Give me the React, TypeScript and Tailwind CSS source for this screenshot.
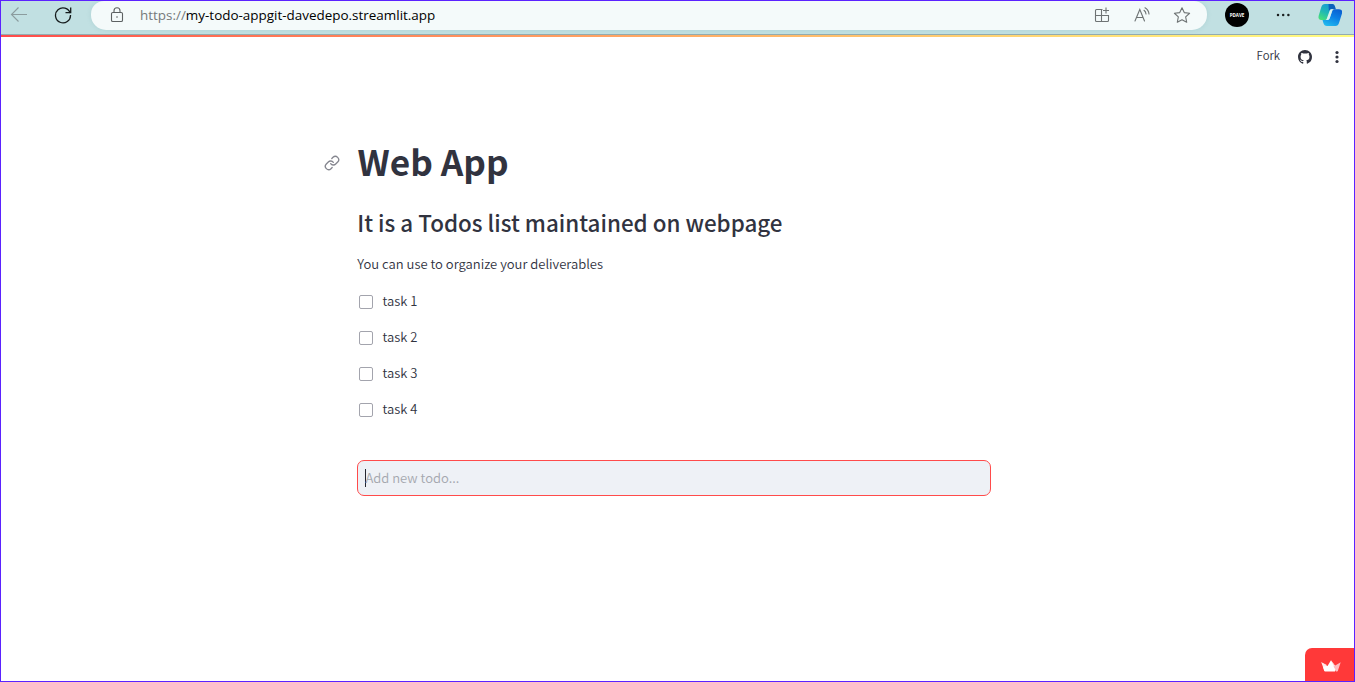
import React from "react";

const sans = "font-['Noto_Sans_CJK_SC','Noto_Sans_CJK_JP',sans-serif]";

function AddressBar() {
  return (
    <div className="flex h-[29px] w-[1116px] items-center rounded-b-[15px] rounded-t-[13px] bg-[#f4fafa] shadow-[0_0_4px_rgba(120,170,175,0.25)]">
      <svg className="-mt-[2px] ml-[19px] h-4 w-[14px]" viewBox="0 0 14 16" fill="none" stroke="#5c6162" strokeWidth="1.1">
        <rect x="1.5" y="5.5" width="11" height="9" rx="1.3" />
        <path d="M4 5.5V3.8a3 3 0 0 1 6 0v1.7" />
        <circle cx="7" cy="10" r="0.8" fill="#5c6162" stroke="none" />
      </svg>
      <div className="-mt-[2px] ml-4 h-5 w-[300px] whitespace-nowrap font-['Open_Sans',sans-serif] text-[13.45px] leading-5 text-black">
        <span className="text-[#74797a]">https://</span>my-todo-appgit-davedepo.streamlit.app
      </div>
      <div className="-mt-[2px] ml-auto mr-[16px] flex items-center gap-[22px]">
        <svg className="h-[18px] w-[18px]" viewBox="0 0 18 18" fill="none" stroke="#6e7374" strokeWidth="1.1">
          <path d="M9.500 3.500h-6a1 1 0 0 0-1 1v10a1 1 0 0 0 1 1h11a1 1 0 0 0 1-1v-5h-13M8.500 3.500v12M13 1.500v6M10 4.500h6" />
        </svg>
        <svg className="h-[18px] w-[18px]" viewBox="0 0 18 18" fill="none" stroke="#6e7374" strokeWidth="1.1" strokeLinecap="round">
          <path d="M2 15L6.800 3.500l4.700 11.500M3.600 11.500h6.300M11 4.300a5 5 0 0 1 2 3.700M12 1.800a8 8 0 0 1 4 6.200" />
        </svg>
        <svg className="h-[18px] w-[18px]" viewBox="0 0 18 18" fill="none" stroke="#6e7374" strokeWidth="1.1" strokeLinejoin="round">
          <path d="M9 1.700l2.250 4.900 5.350.65-3.950 3.650 1.050 5.350L9 13.650 4.300 16.250l1.050-5.350L1.400 7.250l5.350-.65z" />
        </svg>
      </div>
    </div>
  );
}

function BrowserBar() {
  return (
    <header className="flex h-[34px] items-start border-b border-[#92acb0] bg-[#c1e0e2]">
      <svg className="ml-[9px] mt-[5px] h-[18px] w-[18px]" viewBox="0 0 18 18" fill="none" stroke="#8b9c9e" strokeWidth="1.1">
        <path d="M17 8.500H1.500M8.500 1.500l-7 7 7 7" />
      </svg>
      <svg className="ml-[26px] mt-[5px] h-[18px] w-[18px]" viewBox="0 0 18 18" fill="none" stroke="#151b1c" strokeWidth="1.3">
        <path d="M16.200 7.200A7.500 7.500 0 1 0 16.500 9M16.700 1.500v5.200h-5.200" />
      </svg>
      <div className="ml-[19px]">
        <AddressBar />
      </div>
      <div className="ml-[18px] mt-[2px] flex h-6 w-6 items-center justify-center rounded-full bg-black font-['Open_Sans',sans-serif] text-[4.500px] font-bold leading-6 text-white">
        <span className="-mt-px">PDAVE</span>
      </div>
      <svg className="ml-[26px] mt-[12px] h-1 w-4" viewBox="0 0 16 4" fill="#1b2021">
        <circle cx="3" cy="2" r="1.250" />
        <circle cx="8.200" cy="2" r="1.250" />
        <circle cx="13.400" cy="2" r="1.250" />
      </svg>
      <svg className="ml-[27px] mt-[2px] h-6 w-6" viewBox="0 0 24 24">
        <defs>
          <linearGradient id="leaf" x1="0.700" y1="0" x2="0.200" y2="1">
            <stop offset="0" stopColor="#1499d6" />
            <stop offset="0.500" stopColor="#20b7b6" />
            <stop offset="1" stopColor="#49e178" />
          </linearGradient>
          <linearGradient id="wave" x1="0.800" y1="0" x2="0.300" y2="1">
            <stop offset="0" stopColor="#0a5fd0" />
            <stop offset="0.450" stopColor="#0b7fe4" />
            <stop offset="1" stopColor="#20b8ee" />
          </linearGradient>
        </defs>
        <path d="M7 1h8.500L10 15.500c-.4 1-1.100 1.500-2 1.500H3.500C.8 17 .1 15.200.6 13L3.300 4C3.900 2.100 5.100 1 7 1z" fill="url(#leaf)" />
        <path d="M10.500 1H14c2 0 2.700 1.200 3.200 3l.7 2.200h-4c-1.500 0-2.500.6-3 2.300z" fill="#0a62bb" />
        <path d="M17.500 23H9c-2 0-3-1.200-3.600-3l-.9-3H9c1.700 0 2.500-.8 3-2.400l2.300-6.700c.4-1.200 1.200-1.700 2.500-1.700H21c3 0 3.600 2.200 2.900 4.600L21 20c-.6 2-1.700 3-3.500 3z" fill="url(#wave)" />
        <path d="M11.700 7.500c.3-.9 1-1.300 2-1.300h2.100c-1 .2-1.500.8-1.800 1.700l-2.300 7c-.5 1.400-1.200 2.100-2.700 2.100H7.400c1-.3 1.300-.9 1.600-2z" fill="#d8f1ef" />
      </svg>
    </header>
  );
}

function Toolbar() {
  return (
    <div className="flex h-[40px] items-center justify-end pr-[13px] text-[#31333f]">
      <span className={`${sans} -mt-[5px] mr-[18px] text-[11.400px] font-[350] leading-5`}>Fork</span>
      <svg className="mr-[21px] h-[14px] w-[14px]" viewBox="0 0 16 16" fill="currentColor">
        <path d="M8 0C3.580 0 0 3.580 0 8c0 3.540 2.290 6.530 5.470 7.590.4.070.55-.17.55-.38 0-.19-.01-.82-.01-1.490-2.010.37-2.530-.49-2.690-.94-.09-.23-.48-.94-.82-1.130-.28-.15-.68-.52-.01-.53.63-.01 1.080.58 1.230.82.72 1.210 1.870.87 2.330.66.07-.52.28-.87.51-1.070-1.780-.2-3.640-.89-3.640-3.950 0-.87.31-1.590.82-2.150-.08-.2-.36-1.020.08-2.120 0 0 .67-.21 2.200.82a7.600 7.600 0 0 1 4 0c1.530-1.040 2.200-.82 2.200-.82.44 1.100.16 1.920.08 2.120.51.56.82 1.270.82 2.150 0 3.070-1.870 3.750-3.650 3.950.29.25.54.73.54 1.480 0 1.070-.01 1.930-.01 2.200 0 .21.15.46.55.38A8 8 0 0 0 16 8c0-4.420-3.580-8-8-8z" />
      </svg>
      <svg className="h-[14px] w-2" viewBox="0 0 8 14" fill="currentColor">
        <circle cx="4" cy="2.500" r="1.600" />
        <circle cx="4" cy="7" r="1.600" />
        <circle cx="4" cy="11.500" r="1.600" />
      </svg>
    </div>
  );
}

function Task({ label }: { label: string }) {
  return (
    <label className="flex h-9 items-center text-[13.030px] font-[350] leading-5">
      <span className="ml-[2px] mr-[9.500px] mt-[1px] h-[14px] w-[14px] rounded-[2px] border border-[#a3a4ad] bg-white" />
      <span>{label}</span>
    </label>
  );
}

export default function App() {
  return (
    <div className="relative flex h-[682px] w-[1355px] flex-col overflow-hidden border border-[#5b22ff] bg-white">
      <BrowserBar />
      <div className="h-[2px] shrink-0 bg-linear-to-r from-[#ff4b4b] to-[#fffd80]" />
      <Toolbar />
      <main className={`${sans} ml-[356px] w-[634px] pt-[58px] text-[#31333f]`}>
        <div className="-ml-[33px] flex h-[52px] items-center">
          <svg className="mr-[17.500px] mt-[4px] h-4 w-4" viewBox="0 0 24 24" fill="none" stroke="#85868f" strokeWidth="2" strokeLinecap="round" strokeLinejoin="round">
            <path d="M10 13a5 5 0 0 0 7.540.540l3-3a5 5 0 0 0-7.070-7.070l-1.720 1.710" />
            <path d="M14 11a5 5 0 0 0-7.540-.540l-3 3a5 5 0 0 0 7.070 7.070l1.710-1.710" />
          </svg>
          <h1 className="whitespace-nowrap text-[35.200px] font-bold leading-[52px]">Web App</h1>
        </div>
        <h3 className="mt-[17px] h-9 whitespace-nowrap pl-[0.300px] text-[22.400px] font-medium leading-9">It is a Todos list maintained on webpage</h3>
        <p className="mt-[14px] h-5 whitespace-nowrap pl-[0.300px] text-[13.030px] font-[350] leading-5">You can use to organize your deliverables</p>
        <div className="mt-[9px]">
          <Task label="task 1" />
          <Task label="task 2" />
          <Task label="task 3" />
          <Task label="task 4" />
        </div>
        <div className="mt-[33px] flex h-9 items-center rounded-[7px] border border-[#ff4b4b] bg-[#eef1f6] pl-[7px]">
          <span className="h-[18px] w-px bg-[#262730]" />
          <span className="-ml-[0.500px] text-[13.030px] font-[350] leading-5 text-[#a5a8af]">Add new todo...</span>
        </div>
      </main>
      <div className="absolute bottom-0 right-0 flex h-[33px] w-[49px] items-center justify-center rounded-tl-[7px] bg-[#ff3939]">
        <svg className="ml-[2px] mt-[2px] h-[12px] w-[20px]" viewBox="0 0 20 12">
          <path d="M.3 2.200l5.200 2.600L3.500 8z" fill="#ffd0d0" />
          <path d="M.3 2.200L6.500 6l-3 5.300z" fill="#ffe9e9" />
          <path d="M10 .3l5.500 8.200L14 11.500H4.200q-.8 0-1-.8L2 6.500 6.500 6z" fill="#fff" />
          <path d="M10 .3l4 5.200 2.600 5.200q-.3.800-1.100.8z" fill="#ffd2d4" />
          <path d="M19.700 2.200l-2.800 8.500q-.3.800-1.300.8L12.500 6.500z" fill="#ffbcc0" />
        </svg>
      </div>
    </div>
  );
}
